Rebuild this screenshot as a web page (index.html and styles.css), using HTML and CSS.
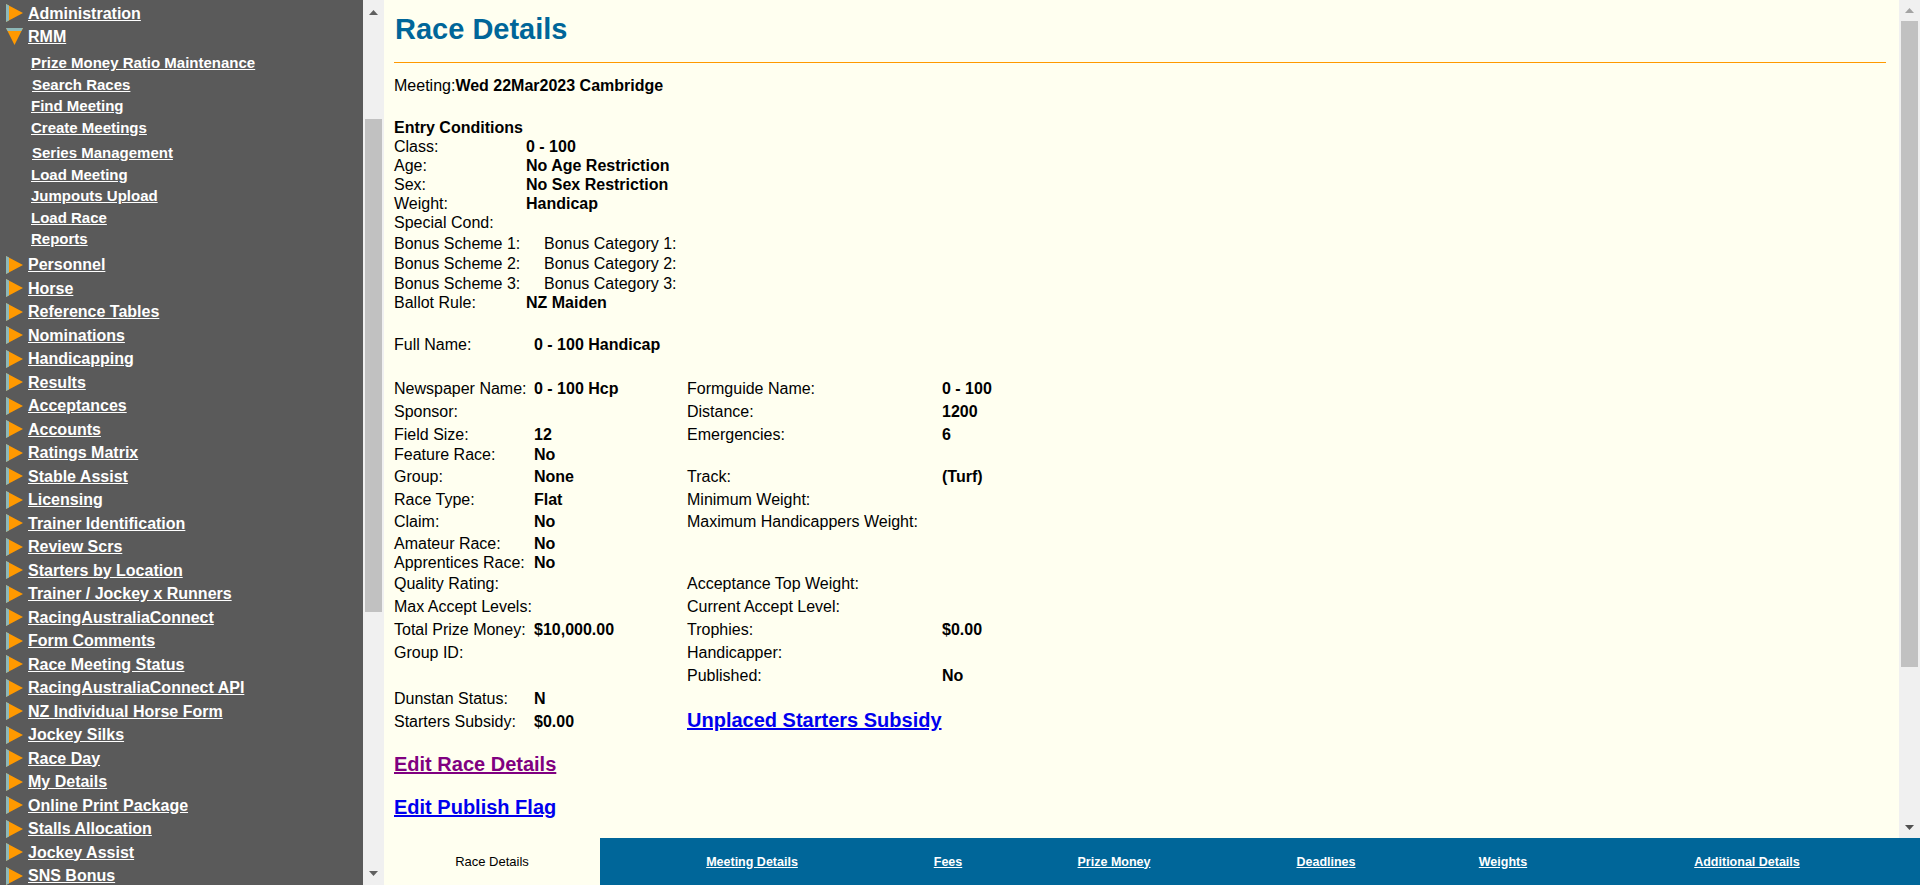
FILE: index.html
```html
<!DOCTYPE html>
<html>
<head>
<meta charset="utf-8">
<title>Race Details</title>
<link rel="stylesheet" href="styles.css">
</head>
<body>
<svg class="defs" width="0" height="0">
  <symbol id="arr-r" viewBox="0 0 17 18">
    <polygon points="0,0 17,9 0,18" fill="#ff9900"/>
    <polygon points="0,0 3,1.6 3,16.4 0,18" fill="#8db8b8"/>
  </symbol>
  <symbol id="arr-d" viewBox="0 0 17 18">
    <polygon points="0,0 17,0 8.5,17" fill="#ff9900"/>
    <polygon points="0,0 17,0 15.4,3 1.6,3" fill="#8db8b8"/>
  </symbol>
</svg>

<aside class="side">
  <nav class="side-nav">
    <ul class="menu">
      <li class="item"><svg class="ico"><use href="#arr-r"/></svg><a href="#">Administration</a></li>
      <li class="item"><svg class="ico"><use href="#arr-d"/></svg><a href="#">RMM</a></li>
      <li>
        <ul class="sub">
          <li><a href="#">Prize Money Ratio Maintenance</a></li>
          <li class="sp"><a href="#">Search Races</a></li>
          <li><a href="#">Find Meeting</a></li>
          <li><a href="#">Create Meetings</a></li>
          <li class="gap sp"><a href="#">Series Management</a></li>
          <li><a href="#">Load Meeting</a></li>
          <li><a href="#">Jumpouts Upload</a></li>
          <li><a href="#">Load Race</a></li>
          <li><a href="#">Reports</a></li>
        </ul>
      </li>
      <li class="item"><svg class="ico"><use href="#arr-r"/></svg><a href="#">Personnel</a></li>
      <li class="item"><svg class="ico"><use href="#arr-r"/></svg><a href="#">Horse</a></li>
      <li class="item"><svg class="ico"><use href="#arr-r"/></svg><a href="#">Reference Tables</a></li>
      <li class="item"><svg class="ico"><use href="#arr-r"/></svg><a href="#">Nominations</a></li>
      <li class="item"><svg class="ico"><use href="#arr-r"/></svg><a href="#">Handicapping</a></li>
      <li class="item"><svg class="ico"><use href="#arr-r"/></svg><a href="#">Results</a></li>
      <li class="item"><svg class="ico"><use href="#arr-r"/></svg><a href="#">Acceptances</a></li>
      <li class="item"><svg class="ico"><use href="#arr-r"/></svg><a href="#">Accounts</a></li>
      <li class="item"><svg class="ico"><use href="#arr-r"/></svg><a href="#">Ratings Matrix</a></li>
      <li class="item"><svg class="ico"><use href="#arr-r"/></svg><a href="#">Stable Assist</a></li>
      <li class="item"><svg class="ico"><use href="#arr-r"/></svg><a href="#">Licensing</a></li>
      <li class="item"><svg class="ico"><use href="#arr-r"/></svg><a href="#">Trainer Identification</a></li>
      <li class="item"><svg class="ico"><use href="#arr-r"/></svg><a href="#">Review Scrs</a></li>
      <li class="item"><svg class="ico"><use href="#arr-r"/></svg><a href="#">Starters by Location</a></li>
      <li class="item"><svg class="ico"><use href="#arr-r"/></svg><a href="#">Trainer / Jockey x Runners</a></li>
      <li class="item"><svg class="ico"><use href="#arr-r"/></svg><a href="#">RacingAustraliaConnect</a></li>
      <li class="item"><svg class="ico"><use href="#arr-r"/></svg><a href="#">Form Comments</a></li>
      <li class="item"><svg class="ico"><use href="#arr-r"/></svg><a href="#">Race Meeting Status</a></li>
      <li class="item"><svg class="ico"><use href="#arr-r"/></svg><a href="#">RacingAustraliaConnect API</a></li>
      <li class="item"><svg class="ico"><use href="#arr-r"/></svg><a href="#">NZ Individual Horse Form</a></li>
      <li class="item"><svg class="ico"><use href="#arr-r"/></svg><a href="#">Jockey Silks</a></li>
      <li class="item"><svg class="ico"><use href="#arr-r"/></svg><a href="#">Race Day</a></li>
      <li class="item"><svg class="ico"><use href="#arr-r"/></svg><a href="#">My Details</a></li>
      <li class="item"><svg class="ico"><use href="#arr-r"/></svg><a href="#">Online Print Package</a></li>
      <li class="item"><svg class="ico"><use href="#arr-r"/></svg><a href="#">Stalls Allocation</a></li>
      <li class="item"><svg class="ico"><use href="#arr-r"/></svg><a href="#">Jockey Assist</a></li>
      <li class="item"><svg class="ico"><use href="#arr-r"/></svg><a href="#">SNS Bonus</a></li>
    </ul>
  </nav>
  <div class="sb side-sb">
    <div class="sb-btn side-btn"><svg class="sb-arrow" viewBox="0 0 9 5"><polygon points="0,5 4.5,0 9,5" fill="#606060"/></svg></div>
    <div class="side-gap"></div>
    <div class="thumb side-thumb"></div>
    <div class="sb-fill"></div>
    <div class="sb-btn side-btn"><svg class="sb-arrow" viewBox="0 0 9 5"><polygon points="0,0 9,0 4.5,5" fill="#606060"/></svg></div>
  </div>
</aside>

<main class="main">
  <div class="content">
    <h1 class="title">Race Details</h1>
    <div class="rule"></div>

    <div class="meeting">Meeting:<b>Wed 22Mar2023 Cambridge</b></div>

    <div class="entry-title">Entry Conditions</div>
    <div class="kv">
      <div class="r19">Class:</div><div class="r19 v">0 - 100</div>
      <div class="r19">Age:</div><div class="r19 v">No Age Restriction</div>
      <div class="r19">Sex:</div><div class="r19 v">No Sex Restriction</div>
      <div class="r19">Weight:</div><div class="r19 v">Handicap</div>
      <div class="r21">Special Cond:</div><div class="r21 v"></div>
    </div>
    <div class="bonus">
      <div class="r20">Bonus Scheme 1:</div><div class="r20">Bonus Category 1:</div>
      <div class="r20">Bonus Scheme 2:</div><div class="r20">Bonus Category 2:</div>
      <div class="r19">Bonus Scheme 3:</div><div class="r19">Bonus Category 3:</div>
    </div>
    <div class="kv">
      <div class="r19">Ballot Rule:</div><div class="r19 v">NZ Maiden</div>
    </div>

    <div class="fullname">
      <div class="r19">Full Name:</div><div class="r19 v">0 - 100 Handicap</div>
    </div>

    <div class="details">
      <div>Newspaper Name:</div><div class="v">0 - 100 Hcp</div><div>Formguide Name:</div><div class="v">0 - 100</div>
      <div>Sponsor:</div><div class="v"></div><div>Distance:</div><div class="v">1200</div>
      <div>Field Size:</div><div class="v">12</div><div>Emergencies:</div><div class="v">6</div>
      <div>Feature Race:</div><div class="v">No</div><div></div><div></div>
      <div>Group:</div><div class="v">None</div><div>Track:</div><div class="v">(Turf)</div>
      <div>Race Type:</div><div class="v">Flat</div><div>Minimum Weight:</div><div class="v"></div>
      <div>Claim:</div><div class="v">No</div><div>Maximum Handicappers Weight:</div><div class="v"></div>
      <div>Amateur Race:</div><div class="v">No</div><div></div><div></div>
      <div>Apprentices Race:</div><div class="v">No</div><div></div><div></div>
      <div>Quality Rating:</div><div class="v"></div><div>Acceptance Top Weight:</div><div class="v"></div>
      <div>Max Accept Levels:</div><div class="v"></div><div>Current Accept Level:</div><div class="v"></div>
      <div>Total Prize Money:</div><div class="v">$10,000.00</div><div>Trophies:</div><div class="v">$0.00</div>
      <div>Group ID:</div><div class="v"></div><div>Handicapper:</div><div class="v"></div>
      <div></div><div></div><div>Published:</div><div class="v">No</div>
      <div>Dunstan Status:</div><div class="v">N</div><div></div><div></div>
      <div>Starters Subsidy:</div><div class="v">$0.00</div><div class="span2"><a class="big-link" href="#">Unplaced Starters Subsidy</a></div>
    </div>

    <div class="edit-race"><a class="big-link visited" href="#">Edit Race Details</a></div>
    <div class="edit-publish"><a class="big-link" href="#">Edit Publish Flag</a></div>
  </div>
  <div class="sb main-sb">
    <div class="sb-btn"><svg class="sb-arrow" viewBox="0 0 9 5"><polygon points="0,5 4.5,0 9,5" fill="#a3a3a3"/></svg></div>
    <div class="thumb main-thumb"></div>
    <div class="sb-fill"></div>
    <div class="sb-btn"><svg class="sb-arrow" viewBox="0 0 9 5"><polygon points="0,0 9,0 4.5,5" fill="#505050"/></svg></div>
  </div>
</main>

<footer class="tabs">
  <table class="tab-table">
    <tr>
      <td class="active t1">Race Details</td>
      <td class="t2"><a href="#">Meeting Details</a></td>
      <td class="t3"><a href="#">Fees</a></td>
      <td class="t4"><a href="#">Prize Money</a></td>
      <td class="t5"><a href="#">Deadlines</a></td>
      <td class="t6"><a href="#">Weights</a></td>
      <td class="t7"><a href="#">Additional Details</a></td>
    </tr>
  </table>
</footer>
</body>
</html>
```

FILE: styles.css
```css
* { box-sizing: border-box; }
html, body { margin: 0; height: 885px; overflow: hidden; }
body {
  width: 1920px;
  display: grid;
  grid-template-columns: 384px 1fr;
  grid-template-rows: 838px 47px;
  font-family: "Liberation Sans", Arial, sans-serif;
  background: #fffff0;
  color: #000;
}
.defs { position: absolute; width: 0; height: 0; overflow: hidden; }

/* ---------- sidebar ---------- */
.side {
  grid-row: 1 / 3;
  grid-column: 1;
  display: flex;
  background: #5a5a5a;
  overflow: hidden;
}
.side-nav { width: 363px; flex: none; overflow: hidden; }
.menu { list-style: none; margin: 0; padding: 1.5px 0 0; }
.item { display: flex; align-items: center; height: 23.5px; }
.ico { width: 17px; height: 18px; margin: 0 5px 0 6px; flex: none; }
.item a {
  color: #fff;
  font-weight: bold;
  font-size: 16px;
  line-height: 23.5px;
  text-decoration: underline;
  white-space: nowrap;
}
.sub { list-style: none; margin: 0; padding: 3.5px 0 3.5px; }
.sub li { padding-left: 31px; height: 21.5px; line-height: 21.5px; }
.sub li.sp { padding-left: 32px; }
.sub li.gap { margin-top: 4px; }
.sub a {
  color: #fff;
  font-weight: bold;
  font-size: 15px;
  text-decoration: underline;
  white-space: nowrap;
}

/* ---------- scrollbars ---------- */
.sb {
  width: 21px;
  flex: none;
  background: #f0f0f0;
  display: flex;
  flex-direction: column;
  align-items: center;
}
.sb-btn {
  width: 21px;
  height: 21px;
  flex: none;
  display: flex;
  align-items: center;
  justify-content: center;
}
.side-btn { height: 24px; }
.sb-arrow { width: 9px; height: 5px; display: block; }
.thumb { width: 17px; flex: none; background: #c1c1c1; }
.sb-fill { flex: 1; }
.side-gap { height: 95px; flex: none; }
.side-thumb { height: 493px; }
.main-thumb { height: 646px; }

/* ---------- main ---------- */
.main {
  grid-row: 1;
  grid-column: 2;
  display: flex;
  overflow: hidden;
  background: #fffff0;
}
.content {
  flex: 1;
  min-width: 0;
  padding: 0 13px 0 10px;
  overflow: hidden;
  font-size: 16px;
  line-height: 19px;
}
.title {
  margin: 12px 0 0;
  padding-left: 1px;
  font-size: 29px;
  line-height: 34px;
  font-weight: bold;
  color: #006699;
}
.rule { margin-top: 16px; border-top: 1px solid #ff9900; }
.meeting { margin-top: 13px; }
.entry-title { margin-top: 23px; font-weight: bold; }
.v { font-weight: bold; }
.kv { display: grid; grid-template-columns: 132px auto; }
.bonus { display: grid; grid-template-columns: 150px auto; }
.r19 { height: 19px; }
.r20 { height: 20px; }
.r21 { height: 21px; }
.fullname { margin-top: 23px; display: grid; grid-template-columns: 140px auto; }
.details {
  margin-top: 25px;
  display: grid;
  grid-template-columns: 140px 153px 255px auto;
  grid-template-rows: 23px 23px 20px 22px 23px 22px 22px 19px 21px 23px 23px 23px 23px 23px 23px 23px;
  white-space: nowrap;
}
.span2 { grid-column: 3 / 5; }
.big-link {
  font-size: 20px;
  font-weight: bold;
  color: #0000ee;
  text-decoration: underline;
  line-height: 16px;
}
.big-link.visited { color: #800080; }
.edit-race { margin-top: 18px; line-height: 23px; }
.edit-publish { margin-top: 19px; line-height: 23px; }
.edit-race .big-link, .edit-publish .big-link { line-height: 23px; }

/* ---------- tabs ---------- */
.tabs { grid-row: 2; grid-column: 2; background: #006699; }
.tab-table { width: 100%; height: 47px; border-collapse: collapse; table-layout: fixed; }
.tab-table td {
  padding: 0;
  text-align: center;
  vertical-align: middle;
  font-size: 12.5px;
  font-weight: bold;
  white-space: nowrap;
}
.tab-table td a { color: #fff; text-decoration: underline; }
.tab-table td.active {
  background: #fffff0;
  color: #000;
  font-weight: normal;
  font-size: 13px;
}
.t1 { width: 216px; }
.t2 { width: 304px; }
.t3 { width: 88px; }
.t4 { width: 244px; }
.t5 { width: 180px; }
.t6 { width: 174px; }
.t7 { width: 330px; padding-right: 16px !important; }
```
